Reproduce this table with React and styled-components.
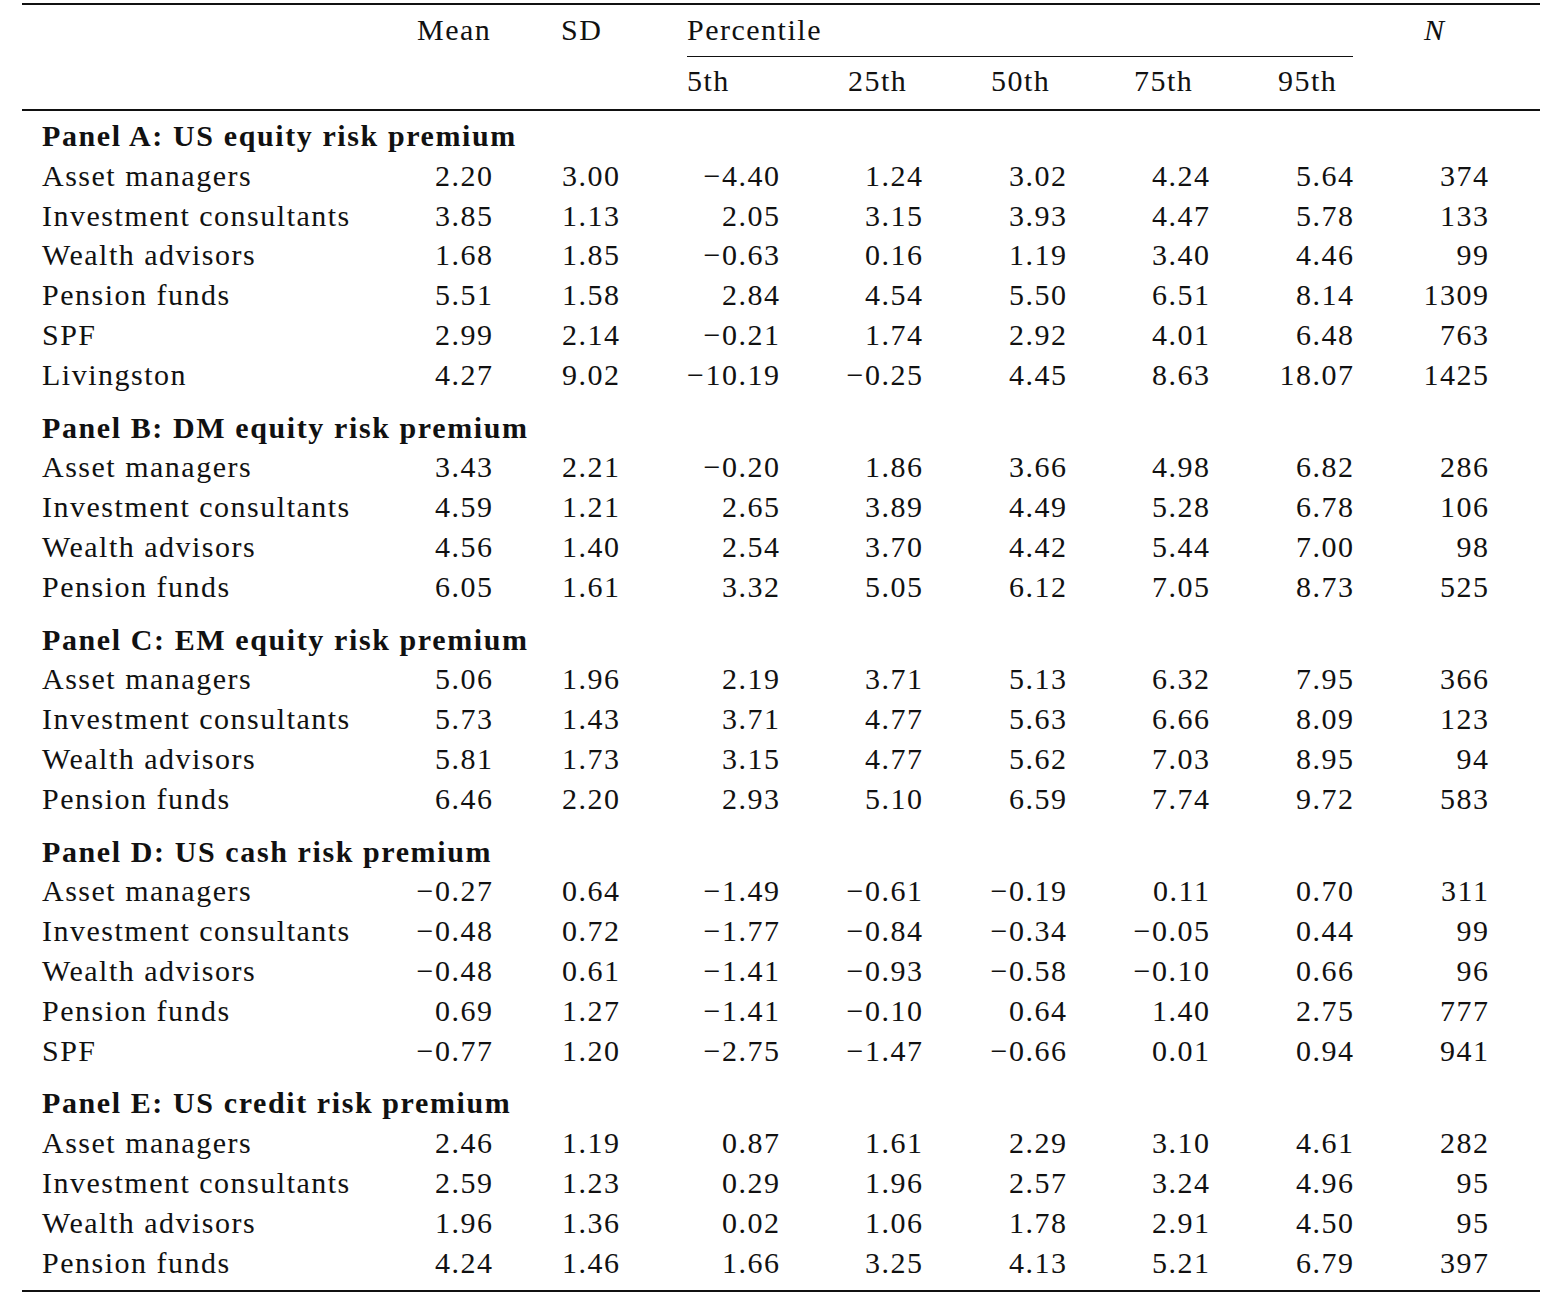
import React from "react";
import styled, { createGlobalStyle } from "styled-components";

const Global = createGlobalStyle`
  html, body { margin: 0; padding: 0; background: #fff; }
  body { font-family: "Liberation Serif", "Times New Roman", serif; color: #111; }
`;

const LS = 1.5;
const COLS = "374px 76px 127px 160px 143px 144px 143px 144px 135px";

const Table = styled.div`
  margin: 3px 0 0 22px;
  width: 1518px;
  border-top: 2px solid #111;
  border-bottom: 2px solid #111;
  font-size: 30px;
  letter-spacing: ${LS}px;
  padding-bottom: 8px;
`;

const Head = styled.div`
  display: grid;
  grid-template-columns: ${COLS};
  grid-template-rows: 52px 52px;
  padding-left: 20px;
  border-bottom: 2px solid #111;
`;

const HeadCell = styled.div`
  grid-row: ${(p) => p.$row};
  grid-column: ${(p) => p.$col};
  justify-self: end;
  width: ${(p) => p.$w}px;
  line-height: 40px;
  padding-top: ${(p) => (p.$row === 1 ? 5 : 4)}px;
  font-style: ${(p) => (p.$italic ? "italic" : "normal")};
  white-space: nowrap;
`;

const Span = styled.div`
  grid-row: 1;
  grid-column: 4 / 9;
  margin-left: 68px;
  line-height: 40px;
  padding-top: 5px;
  border-bottom: 1px solid #111;
  box-sizing: border-box;
  height: 52px;
`;

const PanelTitle = styled.div`
  padding: ${(p) => (p.$first ? 5 : 13)}px 0 0 20px;
  line-height: 39.8px;
  font-weight: bold;
  letter-spacing: 1.6px;
`;

const Row = styled.div`
  display: grid;
  grid-template-columns: ${COLS};
  padding-left: 20px;
  line-height: 39.8px;
`;

const Label = styled.div`
  white-space: nowrap;
`;

const Num = styled.div`
  text-align: right;
  margin-right: -${LS}px;
  white-space: nowrap;
`;

const M = "\u2212";
const fix = (s) => s.replace(/-/g, M);

const panels = [
  {
    title: "Panel A: US equity risk premium",
    rows: [
      ["Asset managers", "2.20 3.00 -4.40 1.24 3.02 4.24 5.64 374"],
      ["Investment consultants", "3.85 1.13 2.05 3.15 3.93 4.47 5.78 133"],
      ["Wealth advisors", "1.68 1.85 -0.63 0.16 1.19 3.40 4.46 99"],
      ["Pension funds", "5.51 1.58 2.84 4.54 5.50 6.51 8.14 1309"],
      ["SPF", "2.99 2.14 -0.21 1.74 2.92 4.01 6.48 763"],
      ["Livingston", "4.27 9.02 -10.19 -0.25 4.45 8.63 18.07 1425"],
    ],
  },
  {
    title: "Panel B: DM equity risk premium",
    rows: [
      ["Asset managers", "3.43 2.21 -0.20 1.86 3.66 4.98 6.82 286"],
      ["Investment consultants", "4.59 1.21 2.65 3.89 4.49 5.28 6.78 106"],
      ["Wealth advisors", "4.56 1.40 2.54 3.70 4.42 5.44 7.00 98"],
      ["Pension funds", "6.05 1.61 3.32 5.05 6.12 7.05 8.73 525"],
    ],
  },
  {
    title: "Panel C: EM equity risk premium",
    rows: [
      ["Asset managers", "5.06 1.96 2.19 3.71 5.13 6.32 7.95 366"],
      ["Investment consultants", "5.73 1.43 3.71 4.77 5.63 6.66 8.09 123"],
      ["Wealth advisors", "5.81 1.73 3.15 4.77 5.62 7.03 8.95 94"],
      ["Pension funds", "6.46 2.20 2.93 5.10 6.59 7.74 9.72 583"],
    ],
  },
  {
    title: "Panel D: US cash risk premium",
    rows: [
      ["Asset managers", "-0.27 0.64 -1.49 -0.61 -0.19 0.11 0.70 311"],
      ["Investment consultants", "-0.48 0.72 -1.77 -0.84 -0.34 -0.05 0.44 99"],
      ["Wealth advisors", "-0.48 0.61 -1.41 -0.93 -0.58 -0.10 0.66 96"],
      ["Pension funds", "0.69 1.27 -1.41 -0.10 0.64 1.40 2.75 777"],
      ["SPF", "-0.77 1.20 -2.75 -1.47 -0.66 0.01 0.94 941"],
    ],
  },
  {
    title: "Panel E: US credit risk premium",
    rows: [
      ["Asset managers", "2.46 1.19 0.87 1.61 2.29 3.10 4.61 282"],
      ["Investment consultants", "2.59 1.23 0.29 1.96 2.57 3.24 4.96 95"],
      ["Wealth advisors", "1.96 1.36 0.02 1.06 1.78 2.91 4.50 95"],
      ["Pension funds", "4.24 1.46 1.66 3.25 4.13 5.21 6.79 397"],
    ],
  },
];

export default function App() {
  return (
    <>
      <Global />
      <Table>
        <Head>
          <HeadCell $row={1} $col={2} $w={75}>Mean</HeadCell>
          <HeadCell $row={1} $col={3} $w={58}>SD</HeadCell>
          <Span>Percentile</Span>
          <HeadCell $row={1} $col={9} $w={64} $italic>N</HeadCell>
          <HeadCell $row={2} $col={4} $w={92}>5th</HeadCell>
          <HeadCell $row={2} $col={5} $w={74}>25th</HeadCell>
          <HeadCell $row={2} $col={6} $w={75}>50th</HeadCell>
          <HeadCell $row={2} $col={7} $w={75}>75th</HeadCell>
          <HeadCell $row={2} $col={8} $w={75}>95th</HeadCell>
        </Head>
        {panels.map((p, i) => (
          <React.Fragment key={p.title}>
            <PanelTitle $first={i === 0}>{p.title}</PanelTitle>
            {p.rows.map(([label, vals]) => (
              <Row key={label}>
                <Label>{label}</Label>
                {vals.split(" ").map((v, j) => (
                  <Num key={j}>{fix(v)}</Num>
                ))}
              </Row>
            ))}
          </React.Fragment>
        ))}
      </Table>
    </>
  );
}
